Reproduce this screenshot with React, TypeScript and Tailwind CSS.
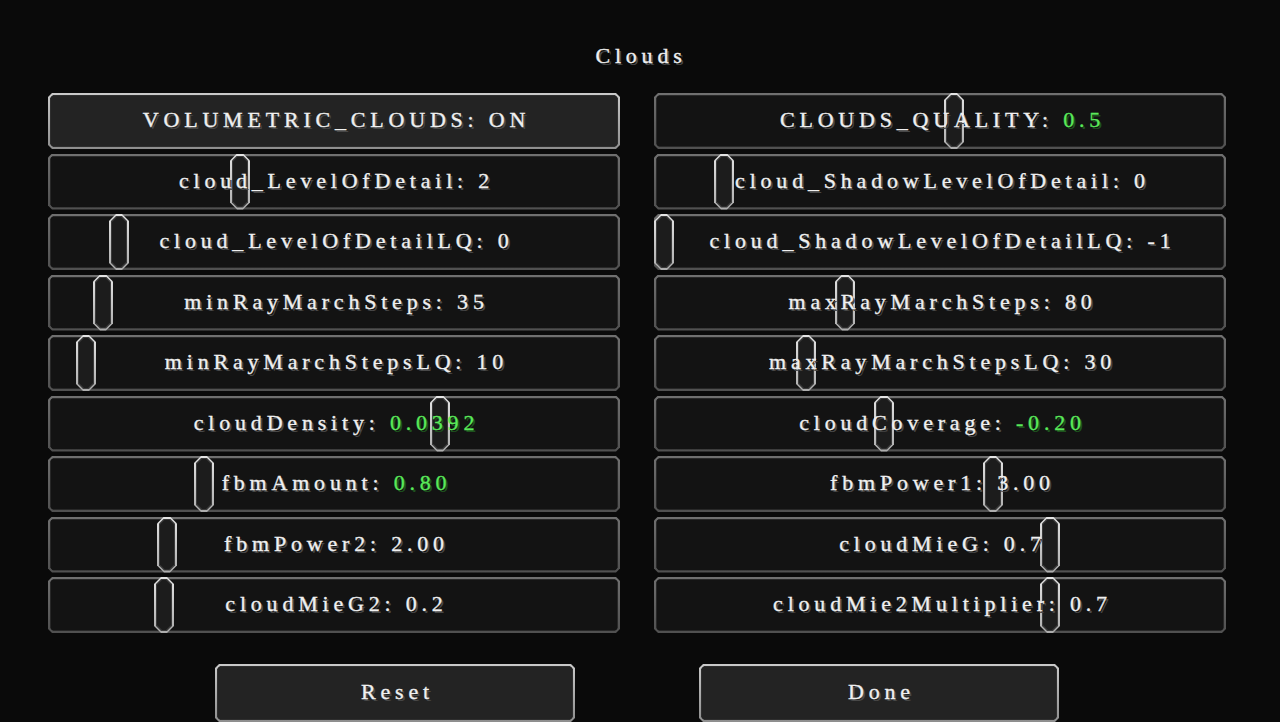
import React from 'react';

type Opt = { label: string; value: string; green?: boolean; knob?: number; button?: boolean };

// knob = left offset of the slider thumb in px, inside a 572px row
const left: Opt[] = [
  { label: 'VOLUMETRIC_CLOUDS', value: 'ON', button: true },
  { label: 'cloud_LevelOfDetail', value: '2', knob: 182 },
  { label: 'cloud_LevelOfDetailLQ', value: '0', knob: 61 },
  { label: 'minRayMarchSteps', value: '35', knob: 45 },
  { label: 'minRayMarchStepsLQ', value: '10', knob: 28 },
  { label: 'cloudDensity', value: '0.0392', green: true, knob: 382 },
  { label: 'fbmAmount', value: '0.80', green: true, knob: 146 },
  { label: 'fbmPower2', value: '2.00', knob: 109 },
  { label: 'cloudMieG2', value: '0.2', knob: 106 },
];

const right: Opt[] = [
  { label: 'CLOUDS_QUALITY', value: '0.5', green: true, knob: 290 },
  { label: 'cloud_ShadowLevelOfDetail', value: '0', knob: 60 },
  { label: 'cloud_ShadowLevelOfDetailLQ', value: '-1', knob: 0 },
  { label: 'maxRayMarchSteps', value: '80', knob: 181 },
  { label: 'maxRayMarchStepsLQ', value: '30', knob: 142 },
  { label: 'cloudCoverage', value: '-0.20', green: true, knob: 220 },
  { label: 'fbmPower1', value: '3.00', knob: 329 },
  { label: 'cloudMieG', value: '0.7', knob: 386 },
  { label: 'cloudMie2Multiplier', value: '0.7', knob: 386 },
];

const clip4 =
  '[clip-path:polygon(4px_0,calc(100%_-_4px)_0,100%_4px,100%_calc(100%_-_4px),calc(100%_-_4px)_100%,4px_100%,0_calc(100%_-_4px),0_4px)]';
const clip3 =
  '[clip-path:polygon(3px_0,calc(100%_-_3px)_0,100%_3px,100%_calc(100%_-_3px),calc(100%_-_3px)_100%,3px_100%,0_calc(100%_-_3px),0_3px)]';
const clip7 =
  '[clip-path:polygon(7px_0,calc(100%_-_7px)_0,100%_7px,100%_calc(100%_-_7px),calc(100%_-_7px)_100%,7px_100%,0_calc(100%_-_7px),0_7px)]';
const clip5 =
  '[clip-path:polygon(5px_0,calc(100%_-_5px)_0,100%_5px,100%_calc(100%_-_5px),calc(100%_-_5px)_100%,5px_100%,0_calc(100%_-_5px),0_5px)]';

const font =
  "font-['Liberation_Serif',serif] text-[22px] tracking-[4.8px] whitespace-pre [-webkit-text-stroke:0.35px_currentColor]";
const shadow = '[text-shadow:2px_2px_0_#484848]';
const greenShadow = '[text-shadow:2px_2px_0_#1e521e]';

const Frame: React.FC<{ button?: boolean; className?: string; children?: React.ReactNode }> = ({
  button,
  className = '',
  children,
}) => (
  <div
    className={`${clip4} p-[2px] ${
      button ? 'bg-gradient-to-b from-[#cacaca] to-[#8e8e8e]' : 'bg-gradient-to-b from-[#707070] to-[#505050]'
    } ${className}`}
  >
    <div className={`${clip3} h-full p-px ${button ? 'bg-[#2e2e2e]' : 'bg-[#282828]'}`}>
      <div className={`h-full ${button ? 'bg-[#232323]' : 'bg-[#131313]'}`}>{children}</div>
    </div>
  </div>
);

const Knob: React.FC<{ x: number }> = ({ x }) => (
  <div className="absolute top-0 h-full w-[20px]" style={{ left: x }}>
    <div className={`${clip7} h-full bg-gradient-to-b from-[#e4e4e4] to-[#acacac] p-[2px]`}>
      <div className={`${clip5} h-full bg-[#3a3a3a] p-px`}>
        <div className={`${clip5} h-full bg-[#1c1c1c]`} />
      </div>
    </div>
  </div>
);

const Row: React.FC<{ o: Opt }> = ({ o }) => (
  <div className="relative h-[56px]">
    <Frame button={o.button} className="h-full" />
    {o.knob !== undefined && <Knob x={o.knob} />}
    <div className={`absolute inset-0 flex items-center justify-center pl-[5px] pb-[3px] ${font}`}>
      <span className={`text-[#f0f0f0] ${shadow}`}>
        {o.label + ': '}
        <span className={o.green ? `text-[#5aea5a] ${greenShadow}` : ''}>{o.value}</span>
      </span>
    </div>
  </div>
);

const BigButton: React.FC<{ label: string }> = ({ label }) => (
  <div className="relative h-[58px] w-[360px]">
    <Frame button className="h-full" />
    <div className={`absolute inset-0 flex items-center justify-center pl-[5px] pb-[3px] text-[#f0f0f0] ${shadow} ${font}`}>
      {label}
    </div>
  </div>
);

export default function App() {
  return (
    <div className="h-[722px] w-[1280px] overflow-hidden bg-[#0a0a0a]">
      <div className={`flex h-[93px] items-start justify-center pt-[39px] pl-[2px] text-[#f0f0f0] ${shadow} ${font}`}>
        Clouds
      </div>
      <div className="flex gap-[34px] pl-[48px] pr-[54px]">
        <div className="flex w-[572px] flex-col gap-[4.5px]">
          {left.map((o) => (
            <Row key={o.label} o={o} />
          ))}
        </div>
        <div className="flex w-[572px] flex-col gap-[4.5px]">
          {right.map((o) => (
            <Row key={o.label} o={o} />
          ))}
        </div>
      </div>
      <div className="mt-[31px] flex justify-center gap-[124px] pr-[6px]">
        <BigButton label="Reset" />
        <BigButton label="Done" />
      </div>
    </div>
  );
}
